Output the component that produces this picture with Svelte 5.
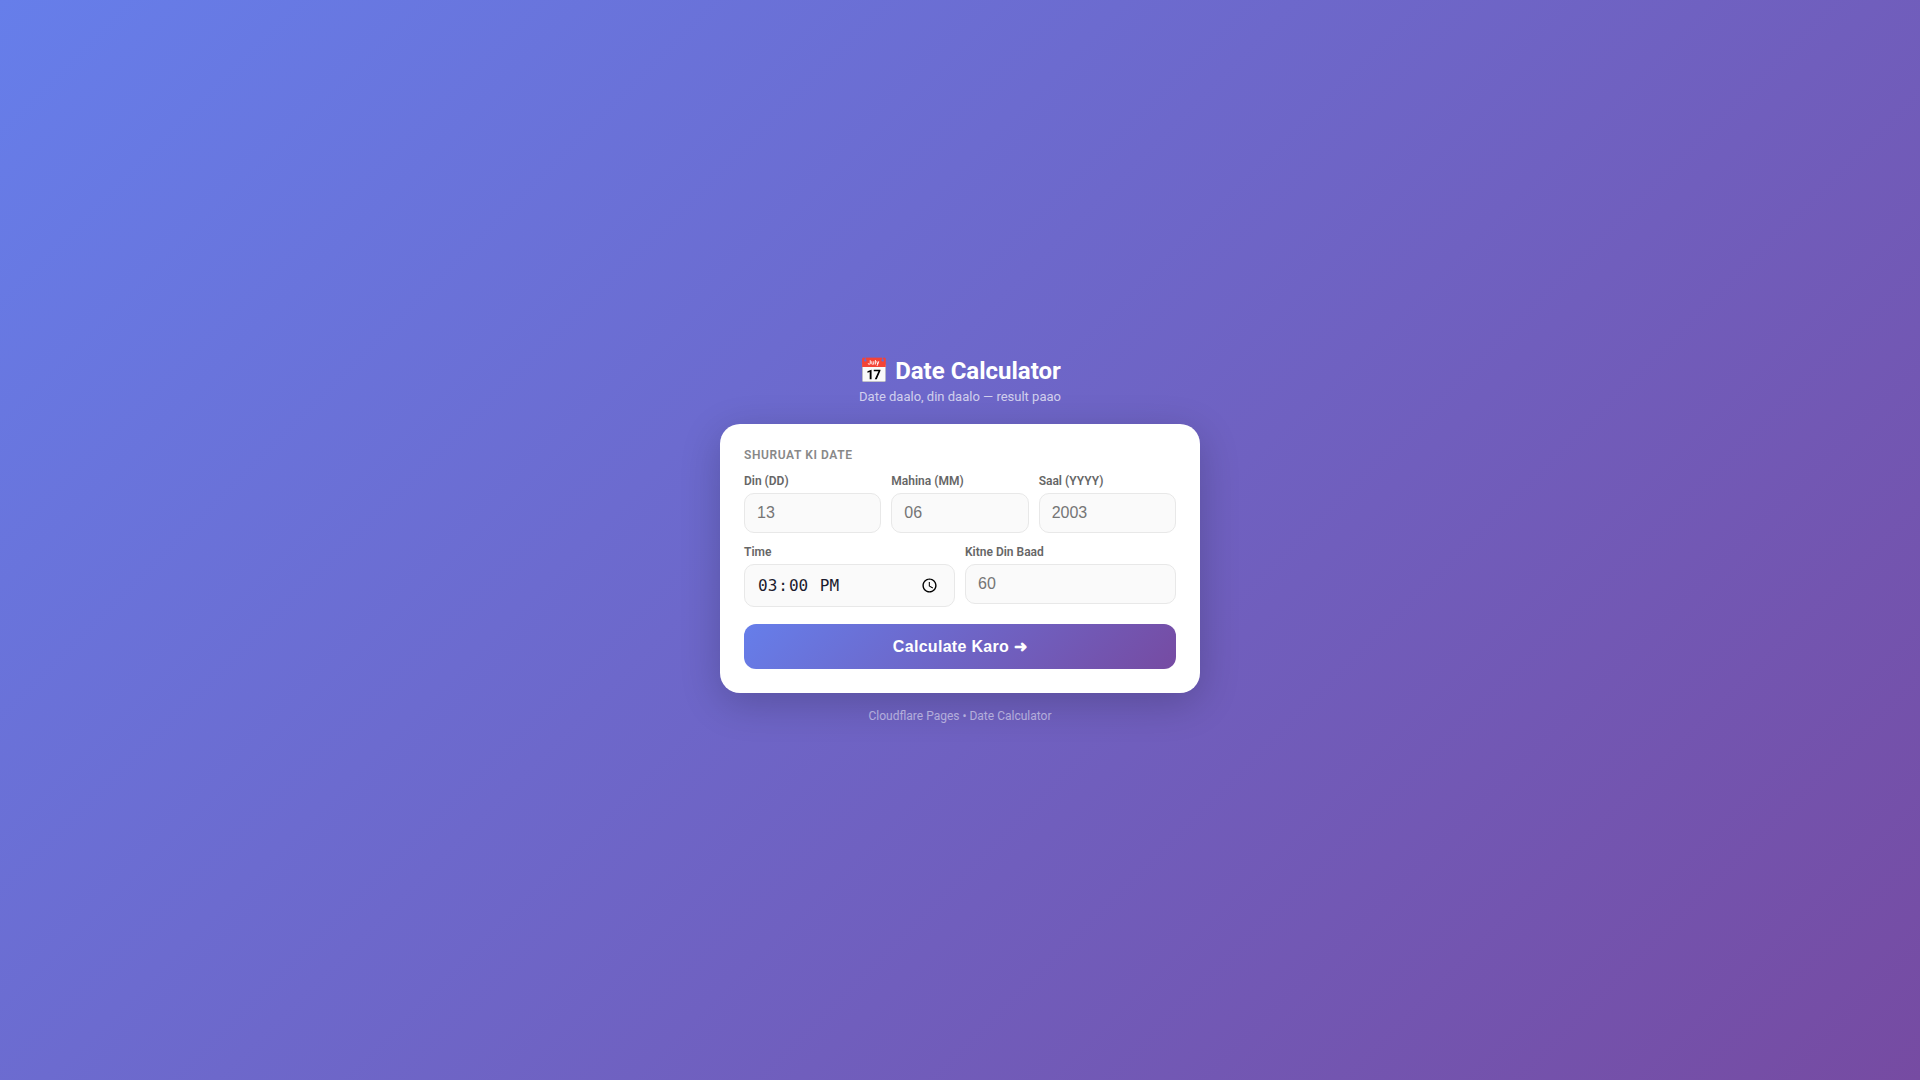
<script>
	let day = $state('');
	let month = $state('');
	let year = $state('');
	let time = $state('15:00');
	let days = $state('');
</script>

<main class="page">
	<header class="head">
		<h1>📅 Date Calculator</h1>
		<p>Date daalo, din daalo — result paao</p>
	</header>

	<section class="card">
		<div class="section-title">Shuruat ki Date</div>

		<div class="row three">
			<div class="field">
				<label for="day">Din (DD)</label>
				<input id="day" type="number" placeholder="13" bind:value={day} />
			</div>
			<div class="field">
				<label for="month">Mahina (MM)</label>
				<input id="month" type="number" placeholder="06" bind:value={month} />
			</div>
			<div class="field">
				<label for="year">Saal (YYYY)</label>
				<input id="year" type="number" placeholder="2003" bind:value={year} />
			</div>
		</div>

		<div class="row two">
			<div class="field">
				<label for="time">Time</label>
				<input id="time" type="time" bind:value={time} />
			</div>
			<div class="field">
				<label for="days">Kitne Din Baad</label>
				<input id="days" type="number" placeholder="60" bind:value={days} />
			</div>
		</div>

		<button class="calc" type="button">Calculate Karo ➜</button>
	</section>

	<footer class="foot">Cloudflare Pages • Date Calculator</footer>
</main>

<style>
	:global(body) {
		margin: 0;
		font-family: Roboto, sans-serif;
	}

	.page {
		min-height: 100vh;
		box-sizing: border-box;
		display: flex;
		flex-direction: column;
		align-items: center;
		justify-content: center;
		background: linear-gradient(135deg, #667eea 0%, #764ba2 100%);
	}

	.head {
		text-align: center;
		color: #fff;
		margin-bottom: 20px;
	}

	h1 {
		margin: 0 0 4px;
		font-size: 24px;
		font-weight: 700;
	}

	.head p {
		margin: 0;
		font-size: 13px;
		color: rgba(255, 255, 255, 0.7);
	}

	.card {
		width: 480px;
		box-sizing: border-box;
		padding: 24px;
		background: #fff;
		border-radius: 20px;
		box-shadow: 0 10px 40px rgba(0, 0, 0, 0.2);
	}

	.section-title {
		font-size: 12px;
		font-weight: 600;
		letter-spacing: 0.6px;
		text-transform: uppercase;
		color: #888;
		margin-bottom: 12px;
	}

	.row {
		display: grid;
		gap: 10px;
		margin-bottom: 12px;
		align-items: start;
	}

	.three {
		grid-template-columns: repeat(3, 1fr);
	}

	.two {
		grid-template-columns: repeat(2, 1fr);
		margin-bottom: 17px;
	}

	.field {
		display: flex;
		flex-direction: column;
		min-width: 0;
	}

	label {
		font-size: 12px;
		font-weight: 600;
		color: #666;
		margin-bottom: 5px;
	}

	input {
		width: 100%;
		box-sizing: border-box;
		padding: 10px 12px;
		border: 1.5px solid #e8e8e8;
		border-radius: 10px;
		background: #fafafa;
		color: #1a1a2e;
		font-size: 16px;
		outline: none;
		-moz-appearance: textfield;
		appearance: textfield;
	}

	input[type='time'] {
		appearance: auto;
		padding: 9.5px 13px 9.5px 12px;
	}

	input::-webkit-outer-spin-button,
	input::-webkit-inner-spin-button {
		-webkit-appearance: none;
		margin: 0;
	}

	.calc {
		display: block;
		width: 100%;
		padding: 13px 14px;
		border: none;
		border-radius: 12px;
		background: linear-gradient(135deg, #667eea, #764ba2);
		color: #fff;
		font-size: 16px;
		font-weight: 700;
		letter-spacing: 0.3px;
		cursor: pointer;
	}

	.foot {
		margin-top: 16px;
		font-size: 12px;
		color: rgba(255, 255, 255, 0.5);
	}
</style>
